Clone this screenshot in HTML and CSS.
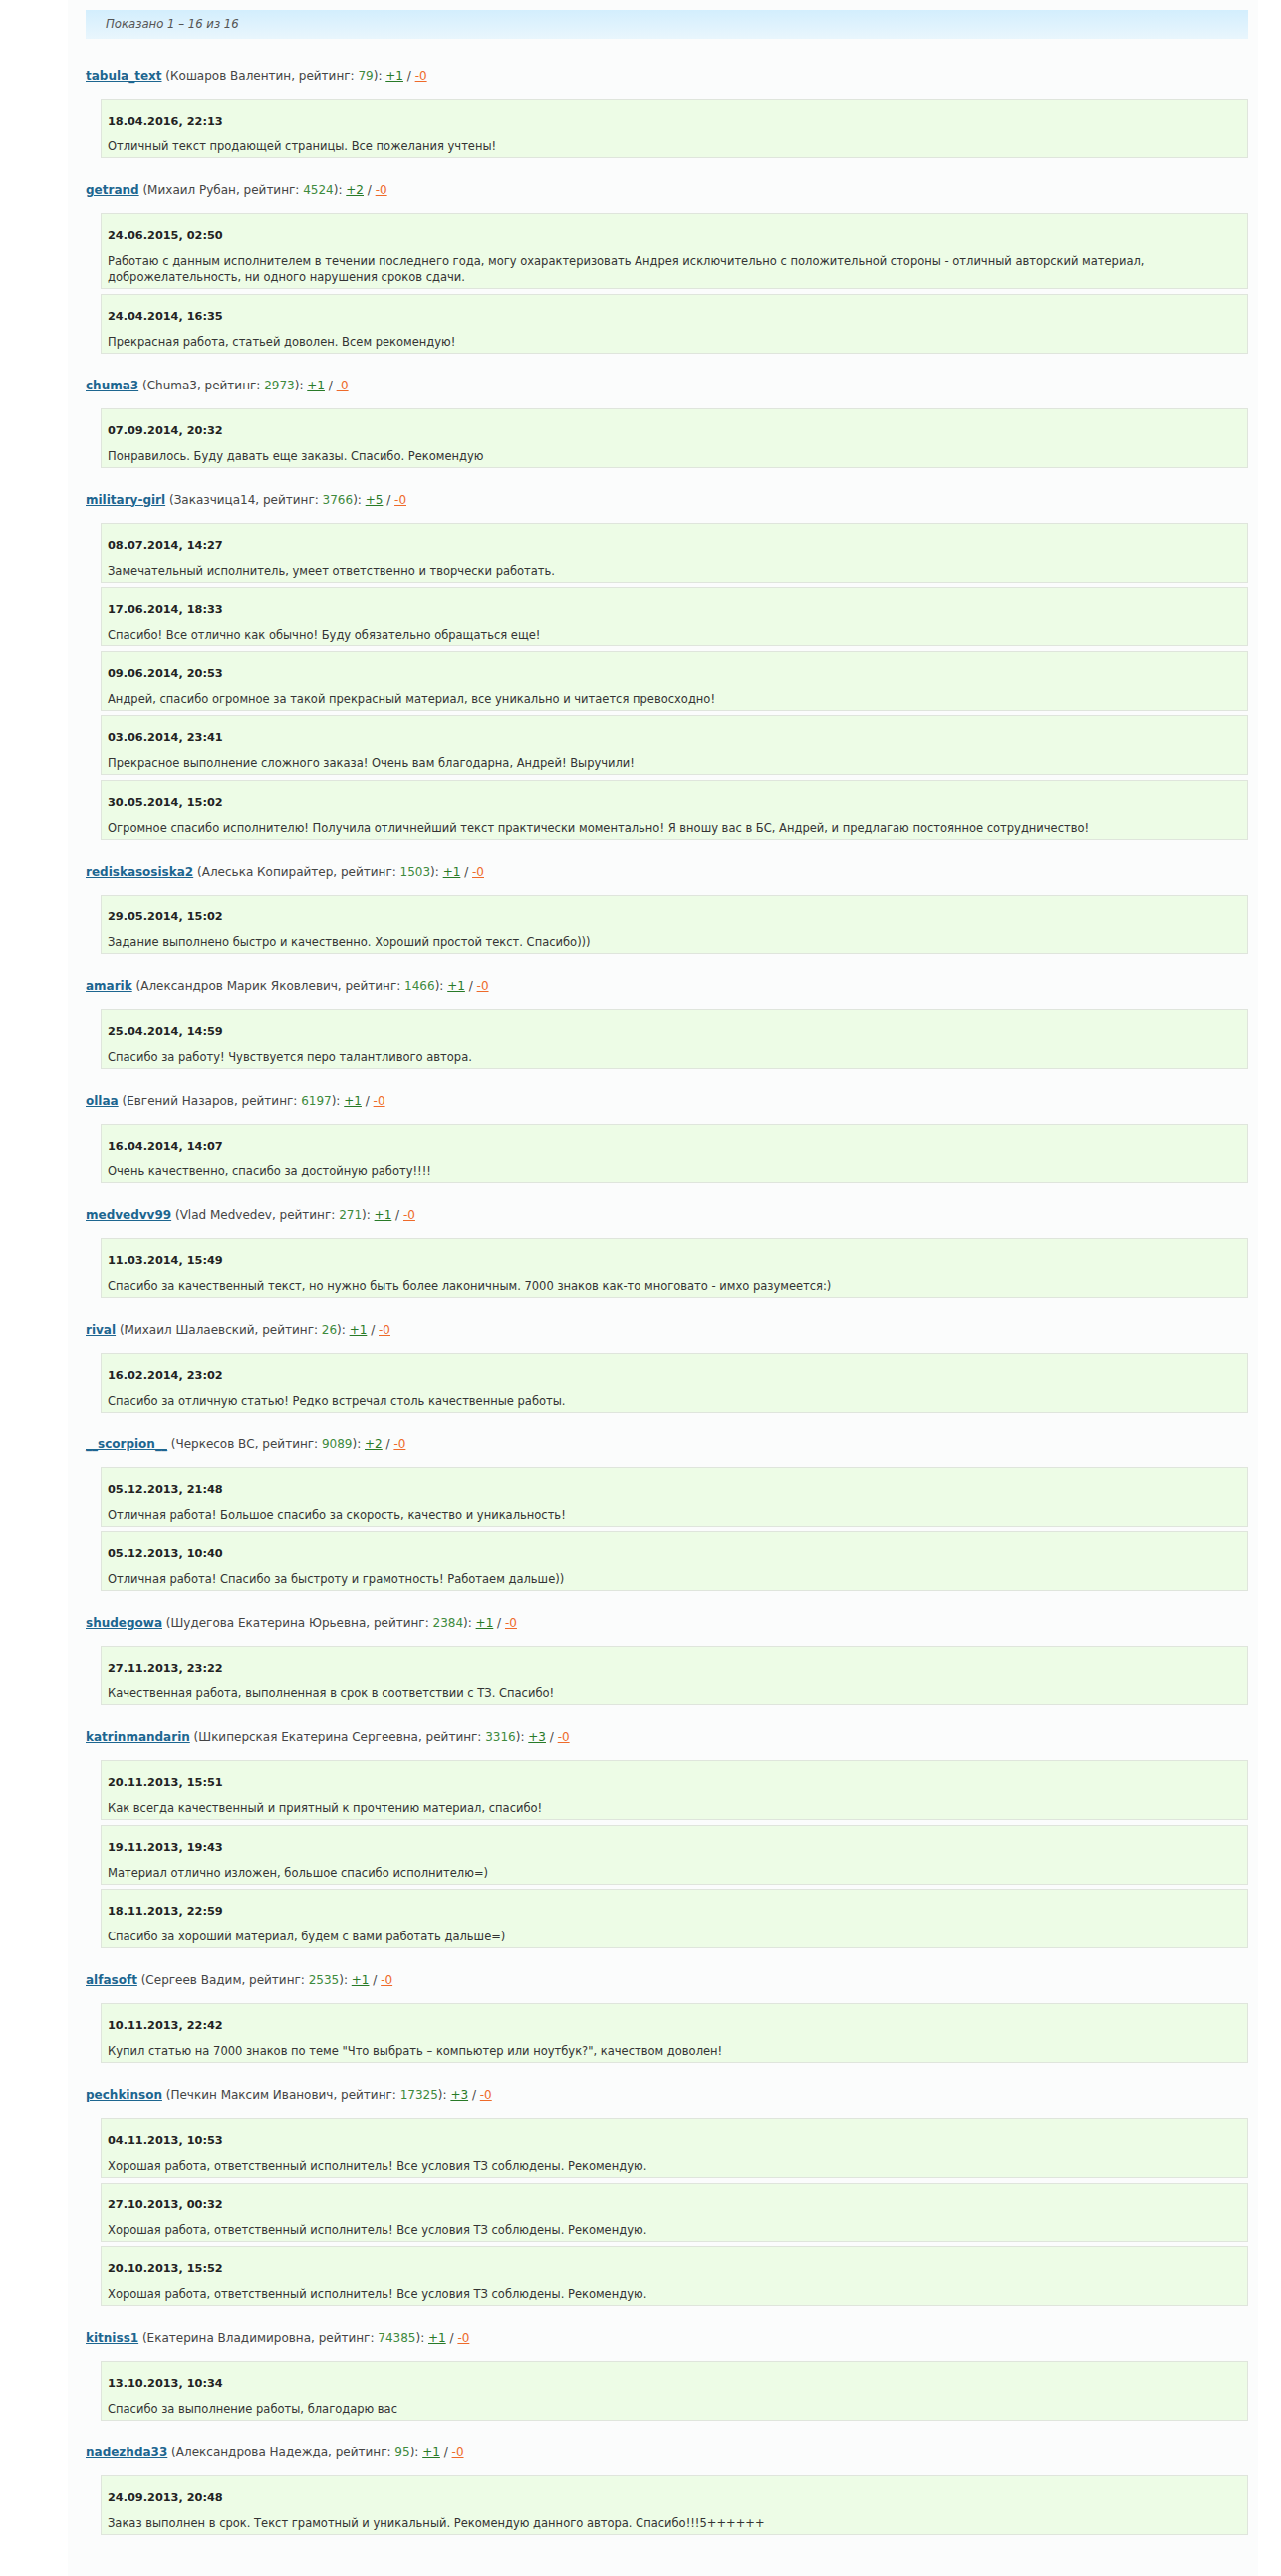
FILE: index.html
```html
<!DOCTYPE html>
<html lang="ru">

<head>
  <meta charset="UTF-8">
  <meta name="viewport" content="width=device-width, initial-scale=1.0">
  <title>Отзывы</title>
  <link rel="stylesheet" href="styles.css">
</head>

<body>
  <div class="content">
    <div class="pager">Показано 1 – 16 из 16</div>

    <div class="reviews">
      <!-- один заказчик = одна группа отзывов -->
      <div class="review">
        <div class="author"><a class="login" href="#">tabula_text</a> (Кошаров Валентин, рейтинг: <span class="rating">79</span>): <a class="plus" href="#">+1</a> / <a class="minus" href="#">-0</a></div>
        <div class="note">
          <div class="note-date">18.04.2016, 22:13</div>
          <div class="note-text">Отличный текст продающей страницы. Все пожелания учтены!</div>
        </div>
      </div>

      <div class="review">
        <div class="author"><a class="login" href="#">getrand</a> (Михаил Рубан, рейтинг: <span class="rating">4524</span>): <a class="plus" href="#">+2</a> / <a class="minus" href="#">-0</a></div>
        <div class="note">
          <div class="note-date">24.06.2015, 02:50</div>
          <div class="note-text">Работаю с данным исполнителем в течении последнего года, могу охарактеризовать Андрея исключительно с положительной стороны - отличный авторский материал,<br>доброжелательность, ни одного нарушения сроков сдачи.</div>
        </div>
        <div class="note">
          <div class="note-date">24.04.2014, 16:35</div>
          <div class="note-text">Прекрасная работа, статьей доволен. Всем рекомендую!</div>
        </div>
      </div>

      <div class="review">
        <div class="author"><a class="login" href="#">chuma3</a> (Chuma3, рейтинг: <span class="rating">2973</span>): <a class="plus" href="#">+1</a> / <a class="minus" href="#">-0</a></div>
        <div class="note">
          <div class="note-date">07.09.2014, 20:32</div>
          <div class="note-text">Понравилось. Буду давать еще заказы. Спасибо. Рекомендую</div>
        </div>
      </div>

      <div class="review">
        <div class="author"><a class="login" href="#">military-girl</a> (Заказчица14, рейтинг: <span class="rating">3766</span>): <a class="plus" href="#">+5</a> / <a class="minus" href="#">-0</a></div>
        <div class="note">
          <div class="note-date">08.07.2014, 14:27</div>
          <div class="note-text">Замечательный исполнитель, умеет ответственно и творчески работать.</div>
        </div>
        <div class="note">
          <div class="note-date">17.06.2014, 18:33</div>
          <div class="note-text">Спасибо! Все отлично как обычно! Буду обязательно обращаться еще!</div>
        </div>
        <div class="note">
          <div class="note-date">09.06.2014, 20:53</div>
          <div class="note-text">Андрей, спасибо огромное за такой прекрасный материал, все уникально и читается превосходно!</div>
        </div>
        <div class="note">
          <div class="note-date">03.06.2014, 23:41</div>
          <div class="note-text">Прекрасное выполнение сложного заказа! Очень вам благодарна, Андрей! Выручили!</div>
        </div>
        <div class="note">
          <div class="note-date">30.05.2014, 15:02</div>
          <div class="note-text">Огромное спасибо исполнителю! Получила отличнейший текст практически моментально! Я вношу вас в БС, Андрей, и предлагаю постоянное сотрудничество!</div>
        </div>
      </div>

      <div class="review">
        <div class="author"><a class="login" href="#">rediskasosiska2</a> (Алеська Копирайтер, рейтинг: <span class="rating">1503</span>): <a class="plus" href="#">+1</a> / <a class="minus" href="#">-0</a></div>
        <div class="note">
          <div class="note-date">29.05.2014, 15:02</div>
          <div class="note-text">Задание выполнено быстро и качественно. Хороший простой текст. Спасибо)))</div>
        </div>
      </div>

      <div class="review">
        <div class="author"><a class="login" href="#">amarik</a> (Александров Марик Яковлевич, рейтинг: <span class="rating">1466</span>): <a class="plus" href="#">+1</a> / <a class="minus" href="#">-0</a></div>
        <div class="note">
          <div class="note-date">25.04.2014, 14:59</div>
          <div class="note-text">Спасибо за работу! Чувствуется перо талантливого автора.</div>
        </div>
      </div>

      <div class="review">
        <div class="author"><a class="login" href="#">ollaa</a> (Евгений Назаров, рейтинг: <span class="rating">6197</span>): <a class="plus" href="#">+1</a> / <a class="minus" href="#">-0</a></div>
        <div class="note">
          <div class="note-date">16.04.2014, 14:07</div>
          <div class="note-text">Очень качественно, спасибо за достойную работу!!!!</div>
        </div>
      </div>

      <div class="review">
        <div class="author"><a class="login" href="#">medvedvv99</a> (Vlad Medvedev, рейтинг: <span class="rating">271</span>): <a class="plus" href="#">+1</a> / <a class="minus" href="#">-0</a></div>
        <div class="note">
          <div class="note-date">11.03.2014, 15:49</div>
          <div class="note-text">Спасибо за качественный текст, но нужно быть более лаконичным. 7000 знаков как-то многовато - имхо разумеется:)</div>
        </div>
      </div>

      <div class="review">
        <div class="author"><a class="login" href="#">rival</a> (Михаил Шалаевский, рейтинг: <span class="rating">26</span>): <a class="plus" href="#">+1</a> / <a class="minus" href="#">-0</a></div>
        <div class="note">
          <div class="note-date">16.02.2014, 23:02</div>
          <div class="note-text">Спасибо за отличную статью! Редко встречал столь качественные работы.</div>
        </div>
      </div>

      <div class="review">
        <div class="author"><a class="login" href="#">__scorpion__</a> (Черкесов ВС, рейтинг: <span class="rating">9089</span>): <a class="plus" href="#">+2</a> / <a class="minus" href="#">-0</a></div>
        <div class="note">
          <div class="note-date">05.12.2013, 21:48</div>
          <div class="note-text">Отличная работа! Большое спасибо за скорость, качество и уникальность!</div>
        </div>
        <div class="note">
          <div class="note-date">05.12.2013, 10:40</div>
          <div class="note-text">Отличная работа! Спасибо за быстроту и грамотность! Работаем дальше))</div>
        </div>
      </div>

      <div class="review">
        <div class="author"><a class="login" href="#">shudegowa</a> (Шудегова Екатерина Юрьевна, рейтинг: <span class="rating">2384</span>): <a class="plus" href="#">+1</a> / <a class="minus" href="#">-0</a></div>
        <div class="note">
          <div class="note-date">27.11.2013, 23:22</div>
          <div class="note-text">Качественная работа, выполненная в срок в соответствии с ТЗ. Спасибо!</div>
        </div>
      </div>

      <div class="review">
        <div class="author"><a class="login" href="#">katrinmandarin</a> (Шкиперская Екатерина Сергеевна, рейтинг: <span class="rating">3316</span>): <a class="plus" href="#">+3</a> / <a class="minus" href="#">-0</a></div>
        <div class="note">
          <div class="note-date">20.11.2013, 15:51</div>
          <div class="note-text">Как всегда качественный и приятный к прочтению материал, спасибо!</div>
        </div>
        <div class="note">
          <div class="note-date">19.11.2013, 19:43</div>
          <div class="note-text">Материал отлично изложен, большое спасибо исполнителю=)</div>
        </div>
        <div class="note">
          <div class="note-date">18.11.2013, 22:59</div>
          <div class="note-text">Спасибо за хороший материал, будем с вами работать дальше=)</div>
        </div>
      </div>

      <div class="review">
        <div class="author"><a class="login" href="#">alfasoft</a> (Сергеев Вадим, рейтинг: <span class="rating">2535</span>): <a class="plus" href="#">+1</a> / <a class="minus" href="#">-0</a></div>
        <div class="note">
          <div class="note-date">10.11.2013, 22:42</div>
          <div class="note-text">Купил статью на 7000 знаков по теме "Что выбрать – компьютер или ноутбук?", качеством доволен!</div>
        </div>
      </div>

      <div class="review">
        <div class="author"><a class="login" href="#">pechkinson</a> (Печкин Максим Иванович, рейтинг: <span class="rating">17325</span>): <a class="plus" href="#">+3</a> / <a class="minus" href="#">-0</a></div>
        <div class="note">
          <div class="note-date">04.11.2013, 10:53</div>
          <div class="note-text">Хорошая работа, ответственный исполнитель! Все условия ТЗ соблюдены. Рекомендую.</div>
        </div>
        <div class="note">
          <div class="note-date">27.10.2013, 00:32</div>
          <div class="note-text">Хорошая работа, ответственный исполнитель! Все условия ТЗ соблюдены. Рекомендую.</div>
        </div>
        <div class="note">
          <div class="note-date">20.10.2013, 15:52</div>
          <div class="note-text">Хорошая работа, ответственный исполнитель! Все условия ТЗ соблюдены. Рекомендую.</div>
        </div>
      </div>

      <div class="review">
        <div class="author"><a class="login" href="#">kitniss1</a> (Екатерина Владимировна, рейтинг: <span class="rating">74385</span>): <a class="plus" href="#">+1</a> / <a class="minus" href="#">-0</a></div>
        <div class="note">
          <div class="note-date">13.10.2013, 10:34</div>
          <div class="note-text">Спасибо за выполнение работы, благодарю вас</div>
        </div>
      </div>

      <div class="review">
        <div class="author"><a class="login" href="#">nadezhda33</a> (Александрова Надежда, рейтинг: <span class="rating">95</span>): <a class="plus" href="#">+1</a> / <a class="minus" href="#">-0</a></div>
        <div class="note">
          <div class="note-date">24.09.2013, 20:48</div>
          <div class="note-text">Заказ выполнен в срок. Текст грамотный и уникальный. Рекомендую данного автора. Спасибо!!!5++++++</div>
        </div>
      </div>
    </div>
  </div>
</body>

</html>
```

FILE: styles.css
```css
* {
  margin: 0;
  padding: 0;
  box-sizing: border-box;
}

body {
  background: #fff;
  font-family: "DejaVu Sans", Verdana, sans-serif;
  font-size: 11px;
  color: #333;
}

.content {
  width: 1195px;
  min-height: 2586px;
  margin-left: 68px;
  padding: 10px 10px 40px 18px;
  background: #fbfcfc;
}

/* полоса с количеством отзывов */
.pager {
  height: 29px;
  line-height: 29px;
  padding-left: 20px;
  background: linear-gradient(#d3eefd, #e9f6fd);
  font-size: 11.7px;
  color: #555;
  font-style: italic;
}

.reviews {
  margin-top: 29px;
}

.review {
  margin-bottom: 24px;
}

.author {
  line-height: 16px;
  margin-bottom: 15px;
  font-size: 12px;
  color: #444;
}

.author .login {
  font-weight: bold;
  color: #1d6690;
}

.rating {
  color: #3d8a3d;
}

.plus {
  color: #287a28;
}

.minus {
  color: #ee6a2a;
}

.note {
  margin-left: 15px;
  padding: 14px 6px 3px;
  background: #edfce6;
  border: 1px solid #dfe5dc;
}

.note + .note {
  margin-top: 4.5px;
}

.note-date {
  line-height: 16px;
  margin-bottom: 9px;
  font-size: 11.3px;
  font-weight: bold;
  color: #222;
}

.note-text {
  line-height: 16px;
  font-size: 11.5px;
}
```
